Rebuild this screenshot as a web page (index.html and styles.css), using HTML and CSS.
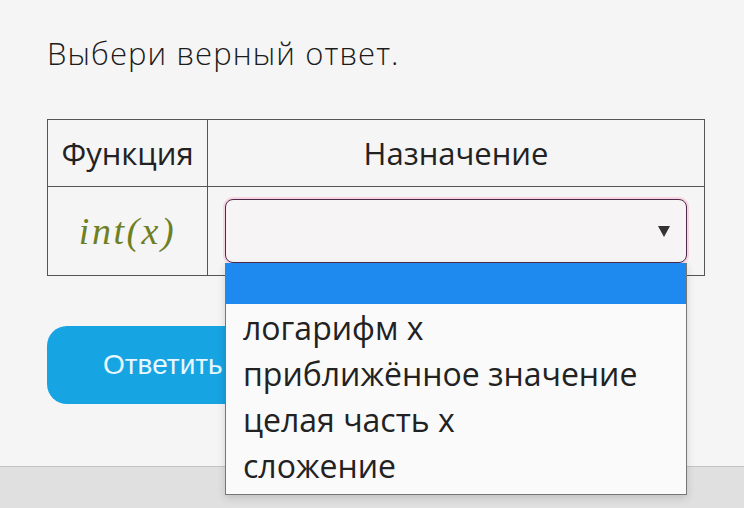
FILE: index.html
```html
<!DOCTYPE html>
<html lang="ru">
<head>
    <meta charset="UTF-8">
    <title>Выбери верный ответ</title>
    <link rel="stylesheet" href="styles.css">
</head>
<body>
    <div class="task">
        <p class="question">Выбери верный ответ.</p>

        <table class="match-table">
            <tr>
                <th class="col-func">Функция</th>
                <th>Назначение</th>
            </tr>
            <tr>
                <td class="col-func"><span class="math">int(x)</span></td>
                <td>
                    <div class="select-wrap">
                        <div class="select-box">
                            <span class="arrow"></span>
                        </div>
                        <ul class="options">
                            <li class="selected"></li>
                            <li>логарифм x</li>
                            <li>приближённое значение</li>
                            <li>целая часть x</li>
                            <li>сложение</li>
                        </ul>
                    </div>
                </td>
            </tr>
        </table>

        <button class="answer-btn">Ответить</button>
    </div>
    <div class="footer"></div>
</body>
</html>
```

FILE: styles.css
```css
body {
    margin: 0;
    padding: 0;
    background-color: #e0e0e0;
    font-family: "Open Sans", sans-serif;
    color: #222;
}

.task {
    height: 434px;
    padding: 32px 39px 0 47px;
    background-color: #f5f5f5;
    border-bottom: 1px solid #c4c4c4;
}

.question {
    margin: 0;
    font-size: 31px;
    font-weight: 300;
    line-height: 42px;
    letter-spacing: 1.1px;
    color: #1c1c1c;
}

.match-table {
    margin-top: 45px;
    width: 658px;
    border-collapse: collapse;
    font-size: 31px;
}

.match-table th,
.match-table td {
    border: 1.5px solid #555;
    text-align: center;
    font-weight: normal;
}

.match-table th {
    height: 64px;
}

.match-table td {
    height: 88px;
    padding: 0 17px 0 17px;
}

.match-table .col-func {
    width: 139px;
    padding: 0 10px;
}

.math {
    font-family: "Liberation Serif", serif;
    font-style: italic;
    font-size: 38px;
    letter-spacing: 2.5px;
    color: #6f8024;
}

.select-wrap {
    position: relative;
}

.select-box {
    height: 62px;
    border: 1.5px solid #4a2a48;
    border-radius: 8px;
    background-color: #f7f4f5;
    box-shadow: 0 0 0 2px #f8d4e0;
    position: relative;
}

.arrow {
    position: absolute;
    right: 16px;
    top: 26px;
    border-left: 6px solid transparent;
    border-right: 6px solid transparent;
    border-top: 11px solid #333;
}

.options {
    position: absolute;
    top: 100%;
    left: 0;
    right: 0;
    margin: 0;
    padding: 0 0 6px 0;
    list-style: none;
    background-color: #fafafa;
    border: 1px solid #777;
    border-top: none;
    box-shadow: 0 3px 8px rgba(0, 0, 0, 0.15);
    text-align: left;
    z-index: 10;
}

.options li {
    height: 46px;
    line-height: 48px;
    padding-left: 17px;
    font-size: 32px;
    color: #222;
}

.options li.selected {
    height: 41px;
    background-color: #1e8af0;
}

.answer-btn {
    display: block;
    margin-top: 50px;
    width: 230px;
    height: 78px;
    padding: 0 0 0 56px;
    text-align: left;
    border: none;
    border-radius: 20px;
    background-color: #17a4e2;
    color: #e8f8ff;
    font-family: "Liberation Sans", sans-serif;
    font-size: 28px;
}

.footer {
    height: 39px;
}
```
